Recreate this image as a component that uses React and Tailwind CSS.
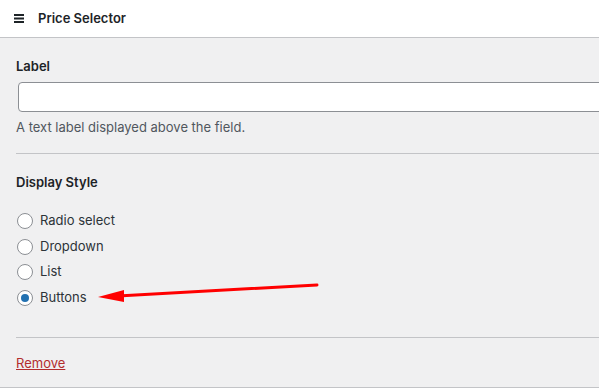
import { useState } from 'react';

const options = ['Radio select', 'Dropdown', 'List', 'Buttons'];

function App() {
  const [style, setStyle] = useState('Buttons');

  return (
    <div
      className="relative w-[599px] h-[388px] overflow-hidden bg-[#f0f0f1] text-[#1d2327] text-[13px]"
      style={{ fontFamily: 'Inter, "Open Sans", sans-serif' }}
    >
      {/* panel header */}
      <div className="h-[38px] bg-white border-b border-[#c3c4c7] flex items-center pl-[14px]">
        <svg width="10" height="9" viewBox="0 0 10 9" className="mr-[14px]">
          <rect x="0" y="0" width="10" height="2" fill="#1d2327" />
          <rect x="0" y="3.5" width="10" height="2" fill="#1d2327" />
          <rect x="0" y="7" width="10" height="2" fill="#1d2327" />
        </svg>
        <span className="font-semibold text-[13px]">Price Selector</span>
      </div>

      <div className="pl-[16px] border-b border-[#c3c4c7] h-[350px] flex flex-col">
        <div className="pt-[19px] pb-[17px] border-b border-[#c3c4c7]">
          <label className="block font-semibold leading-[18px] mb-[7px]">Label</label>
          <input
            type="text"
            className="block ml-[2px] w-[600px] h-[30px] bg-white border border-[#8c8f94] rounded-[4px]"
          />
          <p className="mt-[6px] text-[#50575e] leading-[18px]">
            A text label displayed above the field.
          </p>
        </div>

        <div className="pt-[19px] pb-[30px] border-b border-[#c3c4c7]">
          <div className="font-semibold leading-[18px] mb-[21px]">Display Style</div>
          <div className="flex flex-col gap-[7.5px]">
            {options.map((opt) => (
              <label key={opt} className="flex items-center h-[18px] gap-[7px]">
                <span
                  onClick={() => setStyle(opt)}
                  className="w-[16px] h-[16px] ml-[1px] rounded-full border border-[#8c8f94] bg-white flex items-center justify-center"
                >
                  {style === opt && <span className="w-[8px] h-[8px] rounded-full bg-[#2271b1]" />}
                </span>
                <span className="text-[#2c3338]">{opt}</span>
              </label>
            ))}
          </div>
        </div>

        <div className="pt-[16px]">
          <a href="#" className="text-[#b32d2e] underline">Remove</a>
        </div>
      </div>

      {/* annotation arrow */}
      <svg className="absolute left-0 top-0 pointer-events-none" width="599" height="388">
        <line x1="317" y1="285" x2="118" y2="296" stroke="#f00" strokeWidth="3" strokeLinecap="round" />
        <polygon points="98,297 124,290 124,302" fill="#f00" />
      </svg>
    </div>
  );
}

export default App;
